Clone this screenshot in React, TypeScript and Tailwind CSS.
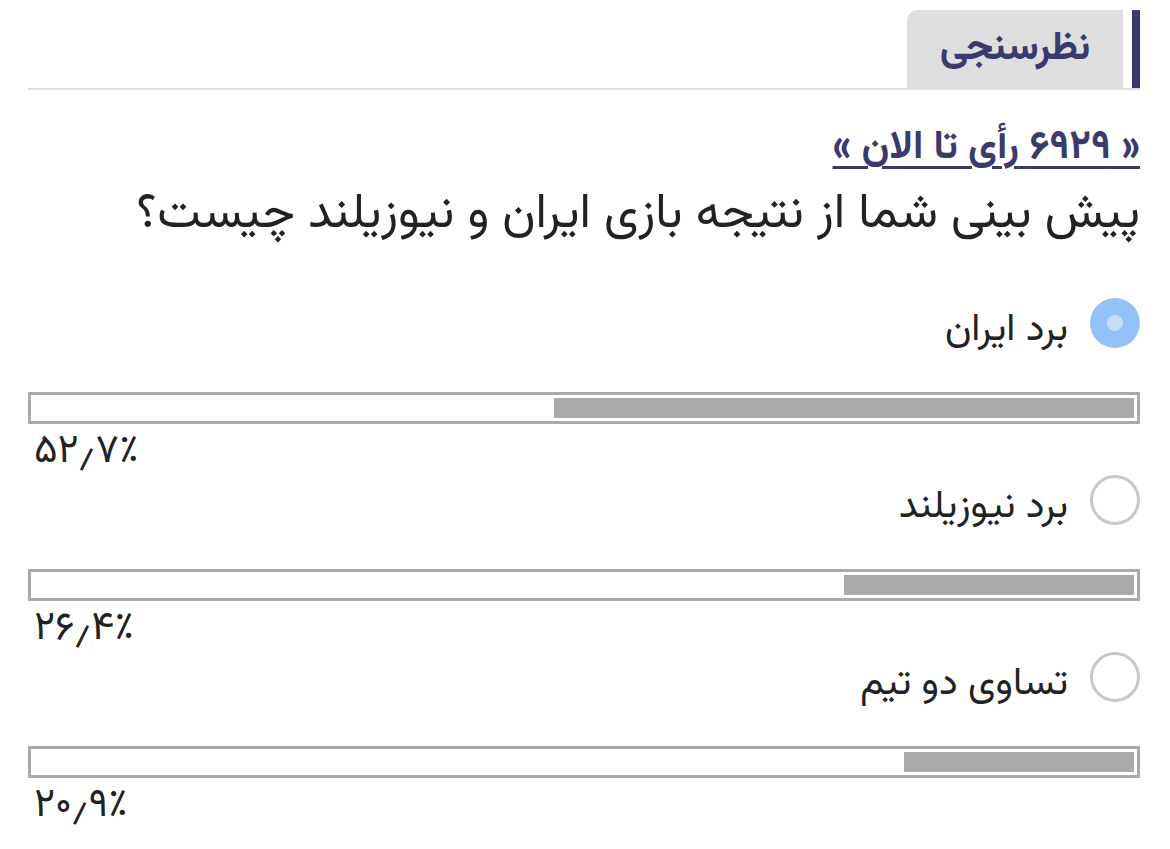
import React, { useState } from 'react';

const options = [
  { id: 1, label: 'برد ایران', percent: 52.7, text: '۵۲٫۷٪' },
  { id: 2, label: 'برد نیوزیلند', percent: 26.4, text: '۲۶٫۴٪' },
  { id: 3, label: 'تساوی دو تیم', percent: 20.9, text: '۲۰٫۹٪' },
];

export default function App() {
  const [selected, setSelected] = useState(1);

  return (
    <div
      dir="rtl"
      className="min-h-screen bg-white pl-[28px] pr-[30px] pt-[10px] text-[#222]"
      style={{ fontFamily: '"Vazirmatn", "Noto Sans Arabic", "DejaVu Sans", sans-serif' }}
    >
      {/* header tab */}
      <div className="flex border-b-2 border-[#dedede]">
        <div className="flex items-stretch gap-[9px]">
          <div className="w-[8px] bg-[#3a3a6c]" />
          <div className="flex h-[78px] w-[216px] items-center justify-center rounded-tl-[10px] bg-[#dedede]">
            <span className="text-[40px] font-bold leading-[50px] text-[#3a3a6c]">نظرسنجی</span>
          </div>
        </div>
      </div>

      <div className="mt-[36px] h-[44px] leading-[44px]">
        <a href="#" className="text-[40px] font-bold text-[#3a3a6c] underline decoration-[3px] underline-offset-[8px]">
          « ۶۹۲۹ رأی تا الان »
        </a>
      </div>

      <h2 className="mt-[15px] h-[60px] text-[49px] leading-[60px] font-normal">
        پیش بینی شما از نتیجه بازی ایران و نیوزیلند چیست؟
      </h2>

      <div className="mt-[53px]">
        {options.map((o) => (
          <div key={o.id} className="mb-[3px]">
            <label className="flex h-[50px] cursor-pointer items-start gap-[22px]" onClick={() => setSelected(o.id)}>
              {selected === o.id ? (
                <span className="flex h-[50px] w-[50px] shrink-0 items-center justify-center rounded-full bg-[#93c1f8]">
                  <span className="h-[16px] w-[16px] rounded-full bg-[#c5dcfa]" />
                </span>
              ) : (
                <span className="h-[50px] w-[50px] shrink-0 rounded-full border-[3px] border-[#c8c8c8] bg-white" />
              )}
              <span className="mt-[8px] text-[39px] leading-[50px]">{o.label}</span>
            </label>

            <div className="mt-[44px] h-[32px] border-[3px] border-[#aaaaaa] bg-white p-[3px]">
              <div className="h-full bg-[#aaaaaa]" style={{ width: `${o.percent}%` }} />
            </div>

            <div dir="ltr" className="mt-[8px] h-[40px] pl-[6px] text-left text-[40px] leading-[40px]">
              {o.text}
            </div>
          </div>
        ))}
      </div>
    </div>
  );
}
